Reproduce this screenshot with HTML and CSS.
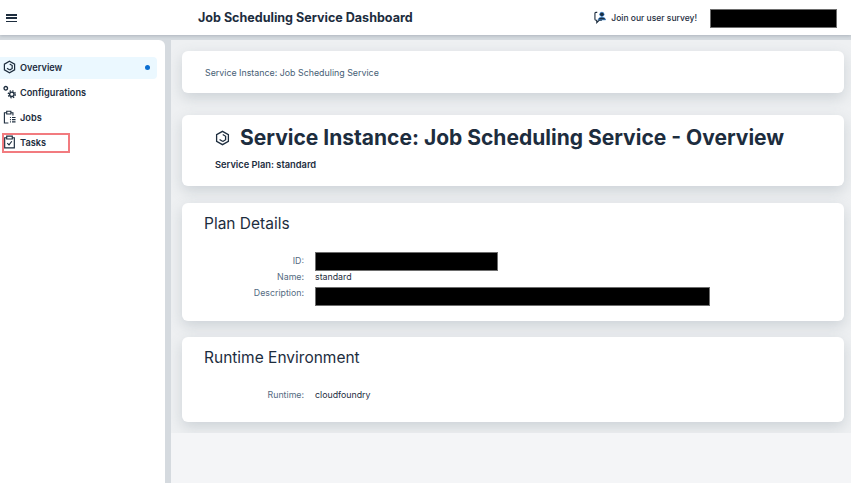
FILE: index.html
```html
<!DOCTYPE html>
<html lang="en">
<head>
<meta charset="utf-8">
<title>Job Scheduling Service Dashboard</title>
<link rel="stylesheet" href="styles.css">
</head>
<body>
<header class="topbar">
  <button class="menu" aria-label="Menu"><span></span><span></span><span></span></button>
  <div class="app-title">Job Scheduling Service Dashboard</div>
  <div class="survey">
    <svg class="survey-icon" viewBox="0 0 14 14" fill="none" stroke="#1d2d3e" stroke-width="1.200"><path d="M3.500 1.500H2a1 1 0 0 0-1 1v6.500a1 1 0 0 0 1 1h1v2.500l2.500-2.500h3"/><circle cx="8.500" cy="3.600" r="2.300" stroke="#0a6ed1" stroke-width=".6" fill="#1d2d3e"/><path d="M4.500 9.500c.4-2 2-2.700 4-2.700s3.600.7 4 2.700z" fill="#1d2d3e" stroke="#0a6ed1" stroke-width=".6"/></svg>
    <span>Join our user survey!</span>
  </div>
  <div class="redact user-box"></div>
</header>
<div class="shell">
  <nav class="sidebar">
    <a class="nav-item active">
      <svg class="nav-icon" viewBox="0 0 14 14" fill="none" stroke="#1d2d3e" stroke-width="1.300"><path d="M7 .8l5.500 3.100v6.200L7 13.200l-5.500-3.100V3.900z"/><path d="M7.200 3.800l2.700 1.600v3.200L7.300 10.200"/><path d="M4.300 8.400l3 1.800"/></svg>
      <span>Overview</span><i class="dot"></i>
    </a>
    <a class="nav-item">
      <svg class="nav-icon" viewBox="0 0 14 14" fill="none" stroke="#1d2d3e"><circle cx="3" cy="3" r="1.900" stroke-width="1.400"/><circle cx="9.500" cy="9.500" r="2.400" stroke-width="1.500"/><circle cx="9.500" cy="9.500" r="3.800" stroke-width="1.400" stroke-dasharray="1.600 1.380"/></svg>
      <span>Configurations</span>
    </a>
    <a class="nav-item">
      <svg class="nav-icon" viewBox="0 0 14 14" fill="none" stroke="#1d2d3e" stroke-width="1.200"><path d="M4 2.400H1.500v11h4.300"/><path d="M4 3.800V.8h4.500v3z"/><path d="M8.500 2.400h2.200v3"/><path d="M7.500 7.500h1M9.700 7.500H13.500M7.500 9.800h1M9.700 9.800H13.500M7.500 12.200h1M9.700 12.200H13.500"/></svg>
      <span>Jobs</span>
    </a>
    <a class="nav-item tasks">
      <svg class="nav-icon" viewBox="0 0 14 14" fill="none" stroke="#1d2d3e" stroke-width="1.250"><path d="M4 2.400H1.800v11h10.400v-11H10"/><path d="M4 3.800V.7h6v3.100z"/><path d="M4.600 8.200l1.900 2 3-4"/></svg>
      <span>Tasks</span>
    </a>
  </nav>
  <main class="content">
    <div class="cards">
      <section class="card crumb-card"><span class="crumb">Service Instance: Job Scheduling Service</span></section>
      <section class="card head-card">
        <h1 class="page-title">
          <svg class="title-icon" viewBox="0 0 14 14" fill="none" stroke="#1d2d3e" stroke-width="1.200"><path d="M7 .8l5.500 3.100v6.200L7 13.200l-5.500-3.100V3.900z"/><path d="M7.200 3.800l2.700 1.600v3.200L7.300 10.200"/><path d="M4.300 8.400l3 1.800"/></svg>
          <span>Service Instance: Job Scheduling Service - Overview</span>
        </h1>
        <p class="plan">Service Plan: standard</p>
      </section>
      <section class="card detail-card">
        <h2>Plan Details</h2>
        <dl class="fields">
          <dt>ID:</dt><dd><div class="redact id-box"></div></dd>
          <dt>Name:</dt><dd>standard</dd>
          <dt class="desc-label">Description:</dt><dd><div class="redact desc-box"></div></dd>
        </dl>
      </section>
      <section class="card runtime-card">
        <h2>Runtime Environment</h2>
        <dl class="fields runtime-fields">
          <dt>Runtime:</dt><dd>cloudfoundry</dd>
        </dl>
      </section>
    </div>
  </main>
</div>
</body>
</html>
```

FILE: styles.css
```css
* { box-sizing: border-box; }
html, body { margin: 0; height: 100%; overflow: hidden; }
body {
  width: 851px;
  height: 483px;
  background: #d5dadf;
  font-family: Inter, "Liberation Sans", sans-serif;
  color: #1d2d3e;
  display: flex;
  flex-direction: column;
}
.topbar {
  height: 35px;
  flex: none;
  background: #fff;
  display: flex;
  align-items: center;
  padding: 0 14px 0 6px;
  position: relative;
  box-shadow: 0 1px 3px rgba(60, 75, 90, .25);
}
.menu {
  width: 11px;
  height: 8px;
  padding: 0;
  border: 0;
  background: none;
  display: flex;
  flex-direction: column;
  justify-content: space-between;
  margin-top: 1px;
}
.menu span { display: block; height: 1.500px; background: #1d2d3e; }
.app-title {
  margin-left: 181px;
  font-size: 12.550px;
  font-weight: 700;
  white-space: nowrap;
}
.survey {
  margin-left: auto;
  display: flex;
  align-items: center;
  gap: 3px;
  font-size: 8.500px;
  font-weight: 500;
}
.survey-icon { display: block; width: 13px; height: 13px; margin-right: 1px; }
.redact { background: #000; border: 1px solid #6d6d6d; }
.user-box { width: 127px; height: 19px; margin-left: 13px; margin-top: 2px; }
.shell { flex: 1; display: flex; min-height: 0; padding-top: 5px; gap: 6px; }
.sidebar {
  width: 165px;
  flex: none;
  background: #fff;
  border-radius: 0 6px 0 0;
  padding-top: 17px;
  display: flex;
  flex-direction: column;
  gap: 3px;
}
.nav-item {
  height: 22px;
  width: 157px;
  display: flex;
  align-items: center;
  gap: 4px;
  padding: 0 7px 2px 3px;
  font-size: 9.200px;
  font-weight: 600;
  border-radius: 0 4px 4px 0;
  position: relative;
}
.nav-item.active { background: #ebf8ff; }
.nav-icon { width: 13px; height: 14px; flex: none; }
.dot {
  width: 5px;
  height: 5px;
  background: #0a6ed1;
  border-radius: 50%;
  margin-left: auto;
}
.tasks::after {
  content: "";
  box-sizing: border-box;
  position: absolute;
  left: 1.500px;
  top: 1px;
  width: 68px;
  height: 19.500px;
  border: 2px solid #f27b7f;
}
.content {
  flex: 1;
  min-width: 0;
  background: #f4f5f7;
  border-radius: 6px 0 0 0;
}
.cards {
  height: 393px;
  overflow: hidden;
  background: #eef0f2;
  padding: 11px 7px 0 11px;
  display: flex;
  flex-direction: column;
}
.card {
  background: #fff;
  border-radius: 6px;
  flex: none;
  box-shadow: 0 5px 14px rgba(100, 115, 130, .24);
}
.crumb-card {
  height: 42px;
  padding-left: 23px;
  display: flex;
  align-items: center;
  margin-bottom: 22px;
}
.crumb { font-size: 8.850px; color: #475e75; }
.head-card { height: 71px; padding: 9px 33px; margin-bottom: 17px; }
.page-title {
  margin: 0;
  font-size: 21px;
  line-height: 27px;
  font-weight: 700;
  display: flex;
  align-items: center;
  gap: 10px;
  white-space: nowrap;
}
.title-icon { width: 15px; height: 16px; flex: none; }
.plan { margin: 8px 0 0; font-size: 9.300px; font-weight: 600; line-height: 11px; }
.detail-card { height: 118px; padding: 11px 22px; margin-bottom: 16px; }
.runtime-card { height: 85px; padding: 11px 22px; }
h2 { margin: 0; font-size: 15.500px; line-height: 20px; font-weight: 400; }
.fields {
  margin: 18px 0 0;
  display: grid;
  grid-template-columns: 100px 1fr;
  column-gap: 11px;
  align-items: start;
  font-size: 8.800px;
  line-height: 11px;
}
.fields dt { text-align: right; color: #556b82; padding-top: 3px; }
.fields dd { margin: 0; }
.fields .desc-label { padding-top: 5px; }
.fields dt:nth-of-type(2) { padding-top: 0; }
.id-box { width: 183px; height: 19px; }
.desc-box { width: 395px; height: 19px; margin-top: 5px; }
.runtime-fields { margin-top: 21px; }
.runtime-fields dt { padding-top: 0; }
```
